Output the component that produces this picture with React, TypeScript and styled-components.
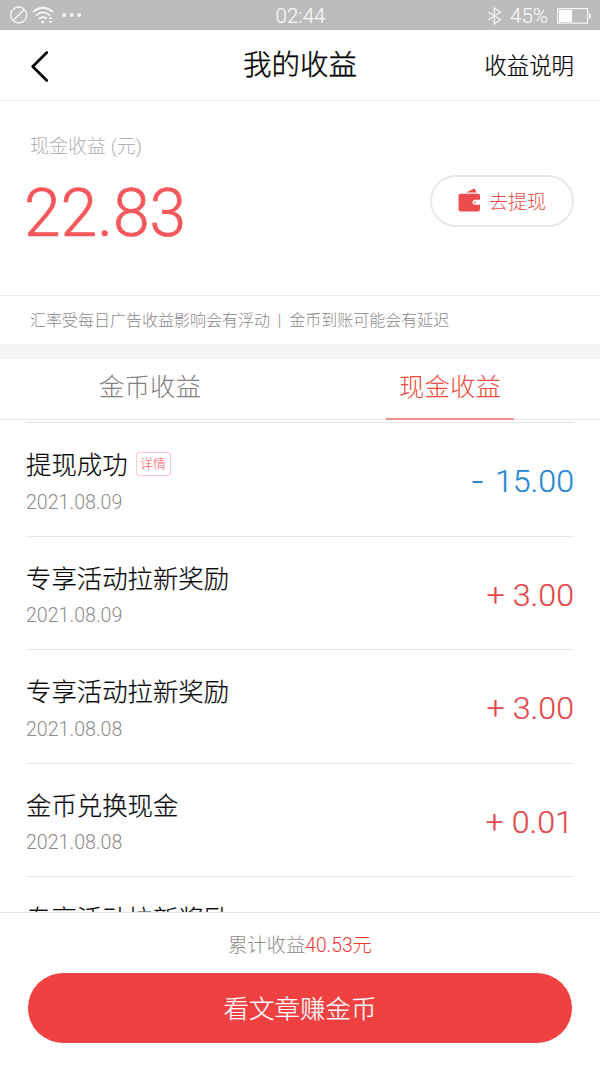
import React from 'react';
import styled, { createGlobalStyle } from 'styled-components';

const GlobalStyle = createGlobalStyle`
  * { box-sizing: border-box; }
  body {
    margin: 0;
    background: #fff;
    font-family: Roboto, 'Noto Sans CJK SC', sans-serif;
    font-weight: 300;
  }
  button { font: inherit; padding: 0; border: 0; background: none; }
`;

const Screen = styled.div`
  width: 600px;
  height: 1067px;
  display: flex;
  flex-direction: column;
  overflow: hidden;
  background: #fff;
`;

const StatusBar = styled.div`
  flex: none;
  height: 30px;
  display: grid;
  grid-template-columns: 1fr auto 1fr;
  align-items: center;
  padding: 2px 9px 0 10px;
  background: #bcbcbc;
  color: #f6f6f6;
  font-size: 20.5px;
  line-height: 28px;
  -webkit-text-stroke: 0.2px;
`;

const StatusGroup = styled.div<{ $end?: boolean }>`
  display: flex;
  align-items: center;
  justify-content: ${(p) => (p.$end ? 'flex-end' : 'flex-start')};
  svg { display: block; }
`;

const Header = styled.header`
  flex: none;
  height: 71px;
  display: grid;
  grid-template-columns: 120px 1fr 120px;
  align-items: center;
  padding: 0 26px;
  border-bottom: 1px solid #ececec;
`;

const BackButton = styled.button`
  display: flex;
  margin: 3px 0 0 5px;
`;

const Title = styled.h1`
  margin: 0;
  padding-top: 2px;
  text-align: center;
  color: #000;
  font-size: 28.5px;
  line-height: 40px;
  font-weight: 300;
  -webkit-text-stroke: 0.35px;
`;

const HelpLink = styled.button`
  justify-self: end;
  padding-top: 2px;
  color: #000;
  font-size: 22.4px;
  line-height: 32px;
  -webkit-text-stroke: 0.2px;
`;

const Balance = styled.section`
  flex: none;
  height: 194px;
  display: flex;
  justify-content: space-between;
  padding: 32px 26px 0 26px;
`;

const BalanceLabel = styled.div`
  padding-left: 4px;
  color: #b0b0b0;
  font-size: 19px;
  line-height: 28px;
`;

const BalanceValue = styled.div`
  margin: 13px 0 0 -2px;
  color: #f5585c;
  font-size: 66px;
  line-height: 80px;
  -webkit-text-stroke: 0.7px;
`;

const WithdrawButton = styled.button`
  display: flex;
  align-items: center;
  justify-content: center;
  gap: 8px;
  width: 144px;
  height: 52px;
  margin-top: 42px;
  border: 2px solid #e8e8e8;
  border-radius: 26px;
  color: #e94f4e;
  font-size: 19px;
  line-height: 28px;
  svg { margin-top: -2px; }
`;

const ButtonText = styled.span`
  padding-top: 3px;
`;

const Notice = styled.div`
  flex: none;
  height: 49px;
  padding: 1px 0 0 30px;
  border-top: 1px solid #ececec;
  color: #888;
  font-size: 16px;
  line-height: 48px;
  white-space: pre;
`;

const Band = styled.div`
  flex: none;
  height: 15px;
  background: #f4f4f4;
`;

const Tabs = styled.nav`
  flex: none;
  height: 61px;
  display: grid;
  grid-template-columns: 1fr 1fr;
  justify-items: center;
  border-bottom: 1px solid #e6e6e6;
`;

const Tab = styled.button<{ $active?: boolean }>`
  width: 128px;
  height: 61px;
  padding-bottom: 4px;
  border-bottom: 2px solid ${(p) => (p.$active ? '#f0908a' : 'transparent')};
  color: ${(p) => (p.$active ? '#ea4b3c' : '#808080')};
  font-size: 25.5px;
  line-height: 38px;
`;

const List = styled.div`
  flex: 1;
  min-height: 0;
  overflow: hidden;
  padding: 2px 26px 0;
`;

const Row = styled.div`
  height: 113.5px;
  display: flex;
  justify-content: space-between;
  border-top: 1px solid #e8e8e8;
`;

const RowTitle = styled.div`
  display: flex;
  align-items: center;
  gap: 8px;
  margin-top: 23px;
  color: #080808;
  font-size: 25.4px;
  line-height: 38px;
  -webkit-text-stroke: 0.2px;
`;

const DetailTag = styled.span`
  width: 35px;
  height: 24px;
  margin-top: -2px;
  border: 1px solid #fbc9c9;
  border-radius: 3px;
  color: #f4595e;
  text-align: center;
  font-size: 13px;
  line-height: 22px;
  -webkit-text-stroke: 0;
`;

const RowDate = styled.div`
  margin-top: 4.5px;
  color: #8c8c8c;
  font-size: 19.6px;
  line-height: 28px;
`;

const Amount = styled.div<{ $out?: boolean; $inset?: number }>`
  display: flex;
  gap: ${(p) => (p.$out ? 10 : 8)}px;
  margin-top: 38px;
  padding-right: ${(p) => p.$inset || 0}px;
  color: ${(p) => (p.$out ? '#2487d0' : '#e5484a')};
  font-size: 32.2px;
  line-height: 40px;
  -webkit-text-stroke: 0.2px;
`;

const Sign = styled.span<{ $out?: boolean }>`
  font-family: ${(p) => (p.$out ? 'Inter' : 'Roboto')}, sans-serif;
`;

const Footer = styled.footer`
  flex: none;
  height: 155px;
  padding: 19px 28px 0;
  border-top: 1px solid #e6e6e6;
  background: #fff;
`;

const Total = styled.div`
  text-align: center;
  color: #8c8c8c;
  font-size: 19.3px;
  line-height: 28px;
`;

const TotalValue = styled.span`
  color: #ec3a36;
`;

const ReadButton = styled.button`
  display: block;
  width: 544px;
  height: 70px;
  margin-top: 13px;
  padding-top: 2px;
  border-radius: 35px;
  background: #f04142;
  color: #fff;
  font-size: 25.5px;
  line-height: 68px;
  -webkit-text-stroke: 0.2px;
`;

interface EarningRecord {
  title: string;
  detail?: boolean;
  date?: string;
  sign?: string;
  amount?: string;
  out?: boolean;
  inset?: number;
}

const records: EarningRecord[] = [
  { title: '提现成功', detail: true, date: '2021.08.09', sign: '-', amount: '15.00', out: true },
  { title: '专享活动拉新奖励', date: '2021.08.09', sign: '+', amount: '3.00' },
  { title: '专享活动拉新奖励', date: '2021.08.08', sign: '+', amount: '3.00' },
  { title: '金币兑换现金', date: '2021.08.08', sign: '+', amount: '0.01', inset: 1 },
  { title: '专享活动拉新奖励' },
];

const SignalIcons = () => (
  <svg width="76" height="22" viewBox="0 0 76 22" fill="none" stroke="#f6f6f6" strokeLinecap="round">
    <circle cx="8.7" cy="10" r="8" strokeWidth="1.3" />
    <path d="M3.2 15.5L14.3 4.5" strokeWidth="1.3" />
    <path d="M23.5 6.5Q33 -1 42.5 6.5" strokeWidth="1.7" />
    <path d="M26.5 10Q33 4.7 39.5 10" strokeWidth="1.7" />
    <path d="M29.5 13.5Q33 11 36.2 13.3" strokeWidth="1.7" />
    <g fill="#f6f6f6" stroke="none">
      <circle cx="32.8" cy="17" r="1.5" />
      <path d="M38.5 14L40.5 11.5L42.5 14ZM38.5 16L40.5 18.5L42.5 16Z" />
      <circle cx="54.2" cy="10" r="1.9" />
      <circle cx="61.7" cy="10" r="1.9" />
      <circle cx="69.2" cy="10" r="1.9" />
    </g>
  </svg>
);

const BluetoothIcon = styled.svg`
  margin-right: 8px;
`;

const BatteryIcon = styled.svg`
  margin-left: 9px;
`;

const BackIcon = () => (
  <svg width="18" height="32" viewBox="0 0 18 32" fill="none" stroke="#000" strokeWidth="2.6" strokeLinecap="round" strokeLinejoin="round">
    <path d="M15.8 1.5L1.7 15.5L15.8 29.5" />
  </svg>
);

const WalletIcon = () => (
  <svg width="23" height="24" viewBox="0 0 23 24" fill="#ec4c4c">
    <path d="M8 4.5L15.3 1Q16.5 0.5 17.2 1.6L18.6 4.5Z" />
    <path d="M2.5 5.8H20Q22 5.8 22 7.8V11.8H17A2.5 2.5 0 0 0 17 16.8H22V21.5Q22 23.5 20 23.5H2.5Q0.5 23.5 0.5 21.5V7.8Q0.5 5.8 2.5 5.8Z" />
    <circle cx="17" cy="14.3" r="1.1" opacity="0.7" />
  </svg>
);

export default function App() {
  return (
    <>
      <GlobalStyle />
      <Screen>
        <StatusBar>
          <StatusGroup>
            <SignalIcons />
          </StatusGroup>
          <span>02:44</span>
          <StatusGroup $end>
            <BluetoothIcon width="15" height="18" viewBox="0 0 15 18" fill="none" stroke="#f6f6f6" strokeWidth="1.2">
              <path d="M1 5L13.5 12.5L7.3 17V1L13.5 5.3L1 13" />
            </BluetoothIcon>
            45%
            <BatteryIcon width="34" height="16" viewBox="0 0 34 16" fill="none">
              <rect x="0.6" y="0.6" width="30" height="14.5" stroke="#f6f6f6" strokeWidth="1.2" />
              <rect x="2" y="2" width="13" height="12" fill="#fff" />
              <rect x="32" y="5.5" width="1.8" height="5" fill="#f6f6f6" />
            </BatteryIcon>
          </StatusGroup>
        </StatusBar>
        <Header>
          <BackButton aria-label="返回">
            <BackIcon />
          </BackButton>
          <Title>我的收益</Title>
          <HelpLink>收益说明</HelpLink>
        </Header>
        <Balance>
          <div>
            <BalanceLabel>现金收益 (元)</BalanceLabel>
            <BalanceValue>22.83</BalanceValue>
          </div>
          <WithdrawButton>
            <WalletIcon />
            <ButtonText>去提现</ButtonText>
          </WithdrawButton>
        </Balance>
        <Notice>汇率受每日广告收益影响会有浮动  |  金币到账可能会有延迟</Notice>
        <Band />
        <Tabs>
          <Tab>金币收益</Tab>
          <Tab $active>现金收益</Tab>
        </Tabs>
        <List>
          {records.map((r, i) => (
            <Row key={i}>
              <div>
                <RowTitle>
                  {r.title}
                  {r.detail && <DetailTag>详情</DetailTag>}
                </RowTitle>
                {r.date && <RowDate>{r.date}</RowDate>}
              </div>
              {r.amount && (
                <Amount $out={r.out} $inset={r.inset}>
                  <Sign $out={r.out}>{r.sign}</Sign>
                  {r.amount}
                </Amount>
              )}
            </Row>
          ))}
        </List>
        <Footer>
          <Total>
            累计收益<TotalValue>40.53元</TotalValue>
          </Total>
          <ReadButton>看文章赚金币</ReadButton>
        </Footer>
      </Screen>
    </>
  );
}
